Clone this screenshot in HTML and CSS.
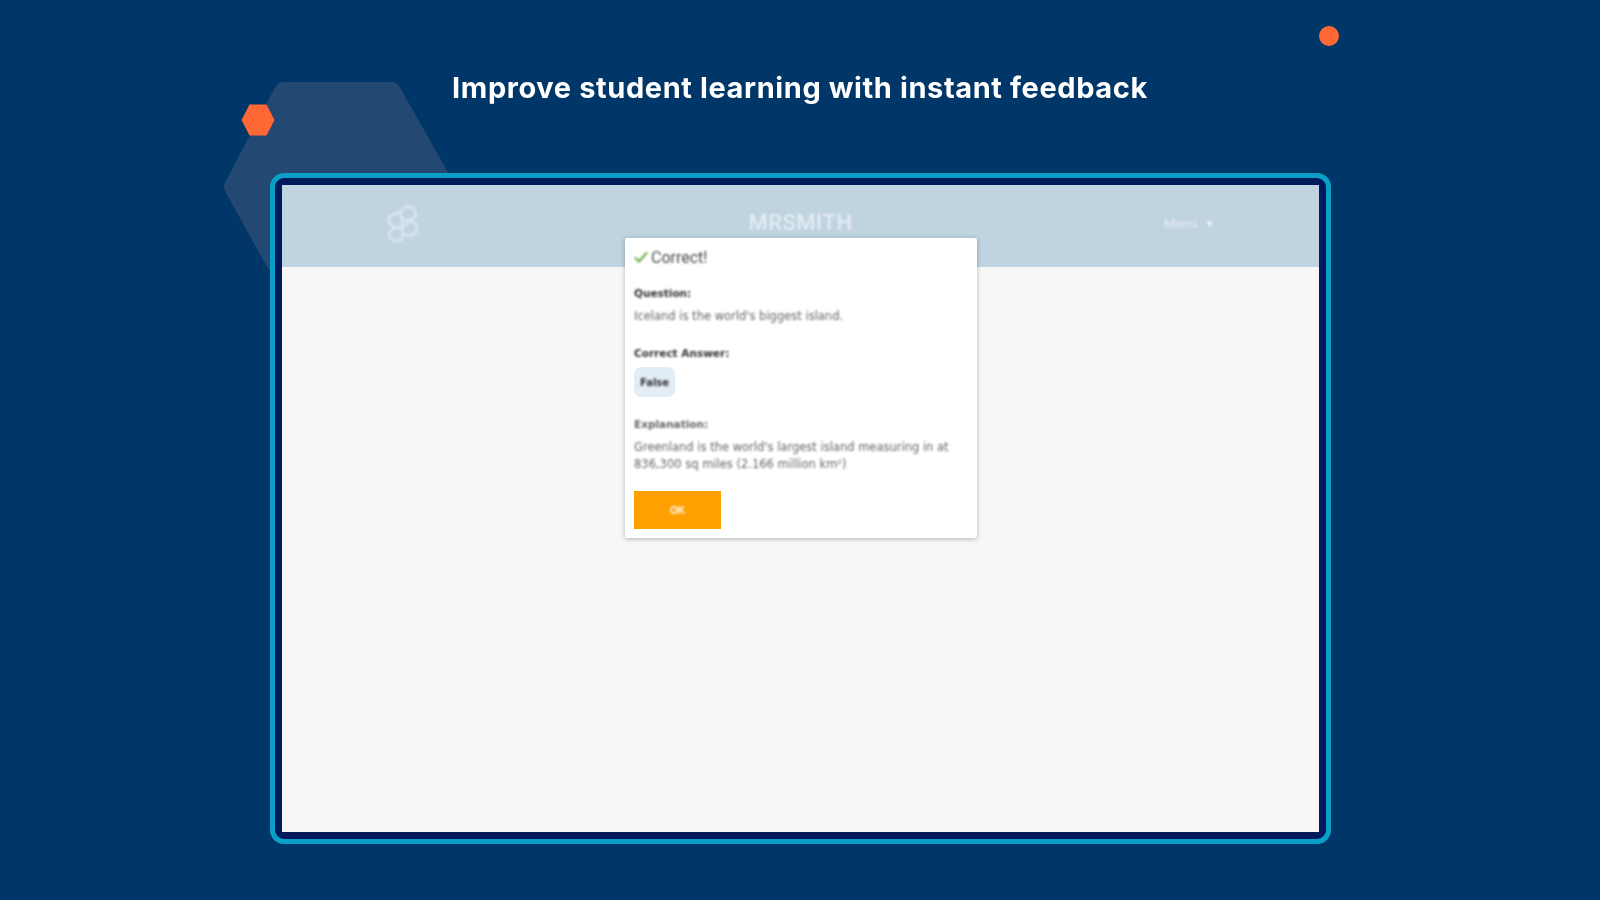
FILE: index.html
```html
<!DOCTYPE html>
<html lang="en">
<head>
<meta charset="utf-8">
<title>Instant feedback</title>
<link rel="stylesheet" href="styles.css">
</head>
<body>
<main class="page">
  <svg class="deco deco-big" width="270" height="240" viewBox="0 0 270 240"><path class="big-hex" d="M72 22H179L260 165V230H85L22 117Z"/></svg>
  <svg class="deco deco-hex" width="36" height="34" viewBox="0 0 36 34"><path class="orange" d="M9.500 1.500H26.500L34.500 17L26.500 32.500H9.500L1.500 17Z"/></svg>
  <svg class="deco deco-dot" width="22" height="22" viewBox="0 0 22 22"><circle class="orange" cx="11" cy="11" r="10"/></svg>
  <h1 class="headline">Improve student learning with instant feedback</h1>
  <section class="frame">
    <div class="screen">
      <header class="topbar">
        <div class="topbar-side">
          <svg class="logo" width="34" height="38" viewBox="0 0 34 38"><g class="logo-lines"><path d="M21 2L29 4.500L31 12L25 17L17 15L15 8Z"/><path d="M25 17L31 20L32 27L26 32L18 30L17 23Z"/><path d="M9 10L15 8L17 15L17 23L10 24L4 19L4 13Z"/><path d="M10 24L17 23L18 30L16 36L9 37L4 32L5 27Z"/></g></svg>
        </div>
        <div class="brand">MRSMITH</div>
        <div class="topbar-side menu-side"><span class="menu">Menu <span class="caret">▾</span></span></div>
      </header>
    </div>
    <div class="dialog">
      <div class="status"><svg class="check" width="14" height="12" viewBox="0 0 14 12"><path d="M1 6.500L5 10.500L13 1.500"/></svg><span>Correct!</span></div>
      <h2 class="label label-first">Question:</h2>
      <p class="copy">Iceland is the world's biggest island.</p>
      <h2 class="label label-answer">Correct Answer:</h2>
      <div class="pill"><span>False</span></div>
      <h2 class="label label-muted">Explanation:</h2>
      <p class="copy">Greenland is the world's largest island measuring in at 836,300 sq miles (2.166 million km²)</p>
      <button class="ok" type="button"><span>OK</span></button>
    </div>
  </section>
</main>
</body>
</html>
```

FILE: styles.css
```css
* { box-sizing: border-box; }
html, body { margin: 0; padding: 0; }
body { background: #003768; font-family: "Liberation Sans", Arial, sans-serif; overflow: hidden; }
.page { position: relative; width: 1600px; height: 900px; display: flex; flex-direction: column; align-items: center; padding-top: 70px; }
.deco { position: absolute; display: block; }
.deco-big { left: 212px; top: 70px; }
.big-hex { fill: #234871; stroke: #234871; stroke-width: 20; stroke-linejoin: round; }
.deco-hex { left: 240px; top: 103px; filter: blur(.6px); }
.deco-dot { left: 1318px; top: 25px; filter: blur(.6px); }
.orange { fill: #ff6835; }
.headline { position: relative; margin: 0 0 65px; height: 38px; line-height: 36px; color: #fff; font-family: Inter, "Open Sans", sans-serif; font-size: 29px; font-weight: 700; letter-spacing: .6px; white-space: nowrap; filter: blur(.6px); }
.frame { position: relative; width: 1061px; height: 671px; margin-left: 1px; padding: 7px; border: 5px solid #0a9fc7; border-radius: 14px; background: #001a5c; }
.screen { height: 100%; background: #f7f7f7; }
.topbar { height: 82px; padding-bottom: 7px; display: grid; grid-template-columns: 1fr auto 1fr; align-items: center; background: #c0d3e1; color: #e4edf3; }
.topbar-side { display: flex; padding-left: 103px; }
.menu-side { justify-content: flex-end; padding-left: 0; padding-right: 106px; }
.logo { display: block; filter: blur(1px); }
.logo-lines { fill: none; stroke: #d8e4ed; stroke-width: 3; stroke-linejoin: round; }
.brand { font-family: Roboto, sans-serif; font-size: 22px; font-weight: 500; letter-spacing: .5px; filter: blur(1px); }
.menu { font-family: Roboto, sans-serif; font-size: 13.500px; filter: blur(1px); }
.caret { margin-left: 5px; }
.dialog { position: absolute; left: 350px; top: 60px; width: 352px; height: 300px; padding: 9px; background: #fff; border-radius: 2px; box-shadow: 0 1px 5px rgba(0, 0, 0, .28); color: #555; }
.status { display: flex; align-items: center; gap: 3px; height: 20px; font-family: Roboto, sans-serif; font-size: 16px; color: #4a4a4a; filter: blur(.9px); }
.check { fill: none; stroke: #68ad3c; stroke-width: 2; display: block; }
.label { margin: 0; font-family: "DejaVu Sans", sans-serif; font-size: 10.500px; line-height: 15px; font-weight: 700; color: #333; filter: blur(.9px); }
.label-first { margin-top: 19px; }
.label-answer { margin-top: 21px; }
.label-muted { margin-top: 20px; color: #666; }
.copy { margin: 7px 0 0; font-family: "DejaVu Sans", sans-serif; font-size: 11.500px; line-height: 17px; color: #666; filter: blur(.9px); }
.pill { width: 41px; height: 30px; margin-top: 6px; display: flex; align-items: center; justify-content: center; border-radius: 7px; background: #e3edf6; font-family: "DejaVu Sans", sans-serif; font-size: 10px; font-weight: 700; color: #333; }
.pill span { filter: blur(.8px); }
.ok { display: flex; align-items: center; justify-content: center; width: 87px; height: 38px; margin-top: 18px; padding: 0; border: 0; background: #ffa000; color: #fff; font-family: "Liberation Sans", sans-serif; font-size: 10px; font-weight: 700; }
.ok span { filter: blur(1px); }
```
